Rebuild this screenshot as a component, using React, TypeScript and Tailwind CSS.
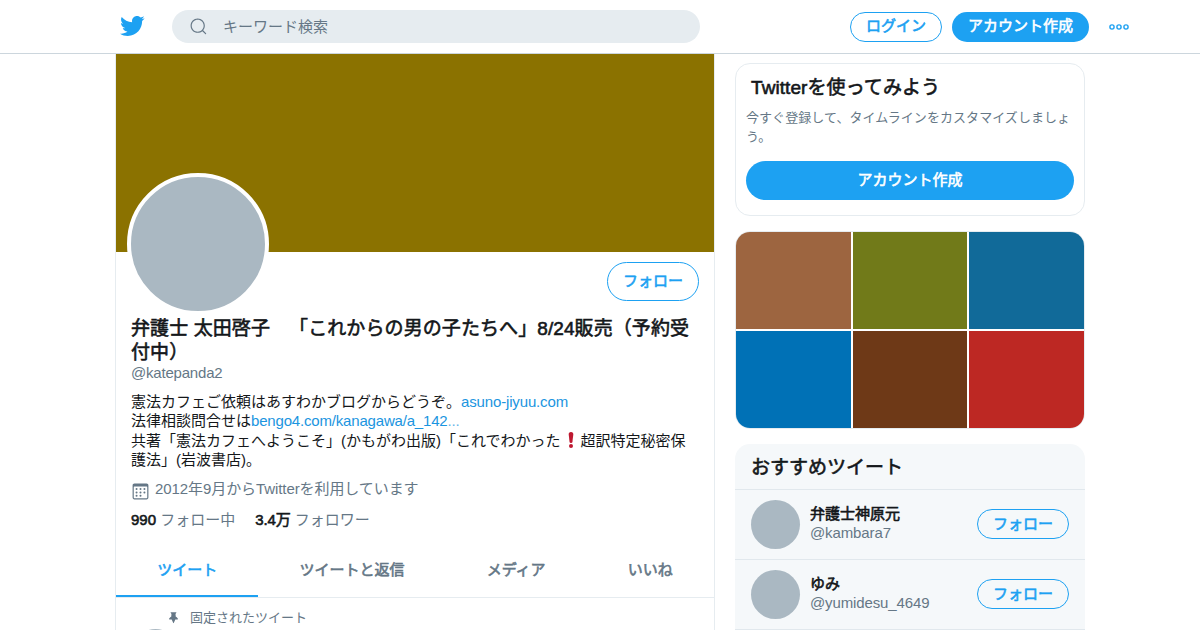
import type { ReactNode } from 'react'

const suggestions = [
  { name: '弁護士神原元', handle: '@kambara7' },
  { name: 'ゆみ', handle: '@yumidesu_4649' },
]

const tabs = ['ツイート', 'ツイートと返信', 'メディア', 'いいね']

const photos = ['bg-[#9d6540]', 'bg-[#717a19]', 'bg-[#116a99]', 'bg-[#0071b6]', 'bg-[#6e3917]', 'bg-[#bd2823]']

function Bold({ children, className = '' }: { children: ReactNode; className?: string }) {
  return <span className={`[-webkit-text-stroke:0.6px_currentColor] ${className}`}>{children}</span>
}

function TwitterLogo() {
  return (
    <svg viewBox="0 0 24 24" className="mb-px size-[26px] fill-[#1da1f2]">
      <path d="M23.643 4.937c-.835.37-1.732.62-2.675.733.962-.576 1.7-1.49 2.048-2.578-.9.534-1.897.922-2.958 1.13-.85-.904-2.06-1.47-3.4-1.47-2.572 0-4.658 2.086-4.658 4.66 0 .364.042.718.12 1.06-3.873-.195-7.304-2.05-9.602-4.868-.4.69-.63 1.49-.63 2.342 0 1.616.823 3.043 2.072 3.878-.764-.025-1.482-.234-2.11-.583v.06c0 2.257 1.605 4.14 3.737 4.568-.392.106-.803.162-1.227.162-.3 0-.593-.028-.877-.082.593 1.85 2.313 3.198 4.352 3.234-1.595 1.25-3.604 1.995-5.786 1.995-.376 0-.747-.022-1.112-.065 2.062 1.323 4.51 2.093 7.14 2.093 8.57 0 13.255-7.098 13.255-13.254 0-.2-.005-.402-.014-.602.91-.658 1.7-1.477 2.323-2.41z" />
    </svg>
  )
}

function SearchIcon() {
  return (
    <svg viewBox="0 0 24 24" className="size-[19px] fill-[#657786]">
      <path d="M21.53 20.47l-3.66-3.66C19.195 15.24 20 13.214 20 11c0-4.97-4.03-9-9-9s-9 4.03-9 9 4.03 9 9 9c2.215 0 4.24-.804 5.808-2.13l3.66 3.66c.147.146.34.22.53.22s.385-.073.53-.22c.295-.293.295-.767.002-1.06zM3.5 11c0-4.135 3.365-7.5 7.5-7.5s7.5 3.365 7.5 7.5-3.365 7.5-7.5 7.5-7.5-3.365-7.5-7.5z" />
    </svg>
  )
}

function MoreIcon() {
  return (
    <svg viewBox="0 0 22 8" className="h-2 w-[22px] fill-none stroke-[#1da1f2] stroke-[1.4]">
      <circle cx="4" cy="4" r="2.1" />
      <circle cx="11" cy="4" r="2.1" />
      <circle cx="18" cy="4" r="2.1" />
    </svg>
  )
}

function CalendarIcon() {
  return (
    <svg viewBox="0 0 24 24" className="mt-[3px] size-[19px] fill-[#657786]">
      <path d="M19.708 2H4.292C3.028 2 2 3.028 2 4.292v15.416C2 20.972 3.028 22 4.292 22h15.416C20.972 22 22 20.972 22 19.708V4.292C22 3.028 20.972 2 19.708 2zm.792 17.708c0 .437-.355.792-.792.792H4.292c-.437 0-.792-.355-.792-.792V6.418c0-.437.354-.79.79-.792h15.42c.436 0 .79.355.79.79V19.71z" />
      <circle cx="7.032" cy="8.75" r="1.285" />
      <circle cx="7.032" cy="13.156" r="1.285" />
      <circle cx="16.968" cy="8.75" r="1.285" />
      <circle cx="16.968" cy="13.156" r="1.285" />
      <circle cx="12" cy="8.75" r="1.285" />
      <circle cx="12" cy="13.156" r="1.285" />
      <circle cx="7.032" cy="17.486" r="1.285" />
      <circle cx="12" cy="17.486" r="1.285" />
    </svg>
  )
}

function PinIcon() {
  return (
    <svg viewBox="0 0 24 24" className="size-[13px] fill-[#657786]">
      <path d="M20.235 14.61c-.375-1.745-2.342-3.506-4.01-4.125l-.544-4.948 1.495-2.242c.157-.236.172-.538.037-.787-.134-.25-.392-.403-.675-.403h-9.14c-.284 0-.542.154-.676.403-.134.25-.12.553.038.788l1.498 2.247-.484 4.943c-1.668.62-3.633 2.38-4.004 4.116-.04.16-.016.404.132.594.103.132.304.29.68.29H8.64l2.904 6.712c.078.184.26.302.458.302s.38-.118.46-.302l2.903-6.713h4.057c.376 0 .576-.156.68-.286.146-.188.172-.434.134-.59z" />
    </svg>
  )
}

function ExclamationMark() {
  return (
    <svg viewBox="0 0 20 18" className="inline h-[18px] w-5 fill-[#be1931] align-[-3px]">
      <path d="M10 1C8.300 1 7.600 2 7.700 3.400L8.600 11.200Q8.800 12 10 12T11.400 11.200L12.300 3.400C12.400 2 11.700 1 10 1z" />
      <circle cx="10" cy="15" r="2" />
    </svg>
  )
}

function FollowButton({ className }: { className: string }) {
  return (
    <button className={`w-[92px] shrink-0 rounded-full border border-[#1da1f2] text-[#1da1f2] ${className}`}>
      <Bold>フォロー</Bold>
    </button>
  )
}

export default function App() {
  return (
    <div className="flex h-[630px] w-[1200px] flex-col overflow-hidden bg-white font-['Liberation_Sans','Noto_Sans_CJK_JP',sans-serif] text-[15px] leading-[19.6px] text-[#14171a] [text-spacing-trim:space-all]">
      <header className="flex h-[54px] shrink-0 items-center border-b border-[#ccd6dd] pl-[119px]">
        <TwitterLogo />
        <div className="ml-[27px] flex h-[33px] w-[528px] items-center rounded-full bg-[#e6ecf0] pl-[16.5px] text-[#657786]">
          <SearchIcon />
          <span className="ml-[15.5px]">キーワード検索</span>
        </div>
        <button className="ml-[150px] h-[30px] w-[92px] rounded-full border border-[#1da1f2] pb-0.5 text-[#1da1f2]">
          <Bold>ログイン</Bold>
        </button>
        <button className="ml-2.5 h-[30px] w-[137px] rounded-full bg-[#1da1f2] pb-0.5 text-white">
          <Bold>アカウント作成</Bold>
        </button>
        <div className="ml-[18.5px]">
          <MoreIcon />
        </div>
      </header>

      <div className="flex min-h-0 flex-1 gap-5 pl-[115px]">
        {/* Profile */}
        <main className="w-[600px] border-x border-[#e6ecf0]">
          <div className="h-[198px] bg-[#8b7200]" />
          <div className="flex h-[65px] items-start justify-between pl-[11px] pr-[15px]">
            <div className="-mt-[79px] size-[142px] rounded-full border-4 border-white bg-[#aab8c2]" />
            <FollowButton className="mt-2.5 h-[39px] pb-0.5" />
          </div>

          <div className="px-[15px]">
            <h1 className="text-[19px] leading-6 tracking-[0.09px]">
              <Bold>弁護士 太田啓子　「これからの男の子たちへ」8/24販売（予約受付中）</Bold>
            </h1>
            <p className="mt-[-2px] tracking-[-0.2px] text-[#657786]">@katepanda2</p>
            <p className="mt-[9px]">
              憲法カフェご依頼はあすわかブログからどうぞ。<span className="tracking-[-0.15px] text-[#1b95e0]">asuno-jiyuu.com</span>
              <br />
              法律相談問合せは<span className="tracking-[-0.18px] text-[#1b95e0]">bengo4.com/kanagawa/a_142<span className="opacity-70">...</span></span>
              <br />
              共著「憲法カフェへようこそ」(かもがわ出版)「これでわかった<ExclamationMark />超訳特定秘密保護法」(岩波書店)。
            </p>
            <div className="mt-[9px] flex h-[22px] gap-[5px] text-[#657786]">
              <CalendarIcon />
              <span className="tracking-[-0.08px]">2012年9月からTwitterを利用しています</span>
            </div>
            <div className="mt-[9px] flex gap-5 text-[#657786]">
              <span><Bold className="text-[#14171a]">990</Bold> フォロー中</span>
              <span><Bold className="tracking-[-0.1px] text-[#14171a]">3.4万</Bold> フォロワー</span>
            </div>
          </div>

          <nav className="mt-[13px] flex h-[55px] border-b border-[#e6ecf0] text-[#657786]">
            {tabs.map((tab, i) => (
              <div
                key={tab}
                className={`flex flex-auto items-center justify-center border-b-2 pt-0.5 ${i === 0 ? 'border-[#1da1f2] text-[#1da1f2]' : 'border-transparent'}`}
              >
                <Bold>{tab}</Bold>
              </div>
            ))}
          </nav>
          <div className="flex items-center gap-2.5 pl-[51px] pt-2.5 text-[13px] text-[#657786]">
            <PinIcon />
            <span>固定されたツイート</span>
          </div>
          <div className="ml-[15px] mt-0.5 size-[49px] rounded-full bg-[#aab8c2]" />
        </main>

        {/* Sidebar */}
        <aside className="w-[350px] pt-[9px]">
          <section className="h-[153px] rounded-[15px] border border-[#e6ecf0] px-2.5 pt-3">
            <h2 className="pl-[5px] text-[19px] leading-6 tracking-[0.08px]"><Bold>Twitterを使ってみよう</Bold></h2>
            <p className="mt-2 text-[13px] leading-[19px] tracking-[0.06px] text-[#657786]">
              今すぐ登録して、タイムラインをカスタマイズしましょう。
            </p>
            <button className="mt-[15px] h-[39px] w-full rounded-full bg-[#1da1f2] pb-0.5 text-white">
              <Bold>アカウント作成</Bold>
            </button>
          </section>

          <section className="mt-[15px] grid h-[198px] grid-cols-3 grid-rows-2 gap-0.5 overflow-hidden rounded-[15px] border border-[#e6ecf0]">
            {photos.map((color) => (
              <div key={color} className={color} />
            ))}
          </section>

          <section className="mt-[15px] h-[400px] rounded-[15px] bg-[#f5f8fa]">
            <h2 className="flex h-[46px] items-center border-b border-[#e1e8ed] px-4 pt-0.5 text-[19px]"><Bold>おすすめツイート</Bold></h2>
            {suggestions.map((user) => (
              <div key={user.handle} className="flex h-[70px] items-center border-b border-[#e1e8ed] px-4">
                <div className="size-[49px] rounded-full bg-[#aab8c2]" />
                <div className="ml-2.5 flex-1 pb-[3px] leading-[19px]">
                  <div><Bold>{user.name}</Bold></div>
                  <div className="tracking-[-0.12px] text-[#657786]">{user.handle}</div>
                </div>
                <FollowButton className="mb-px h-[30px]" />
              </div>
            ))}
          </section>
        </aside>
      </div>
    </div>
  )
}
